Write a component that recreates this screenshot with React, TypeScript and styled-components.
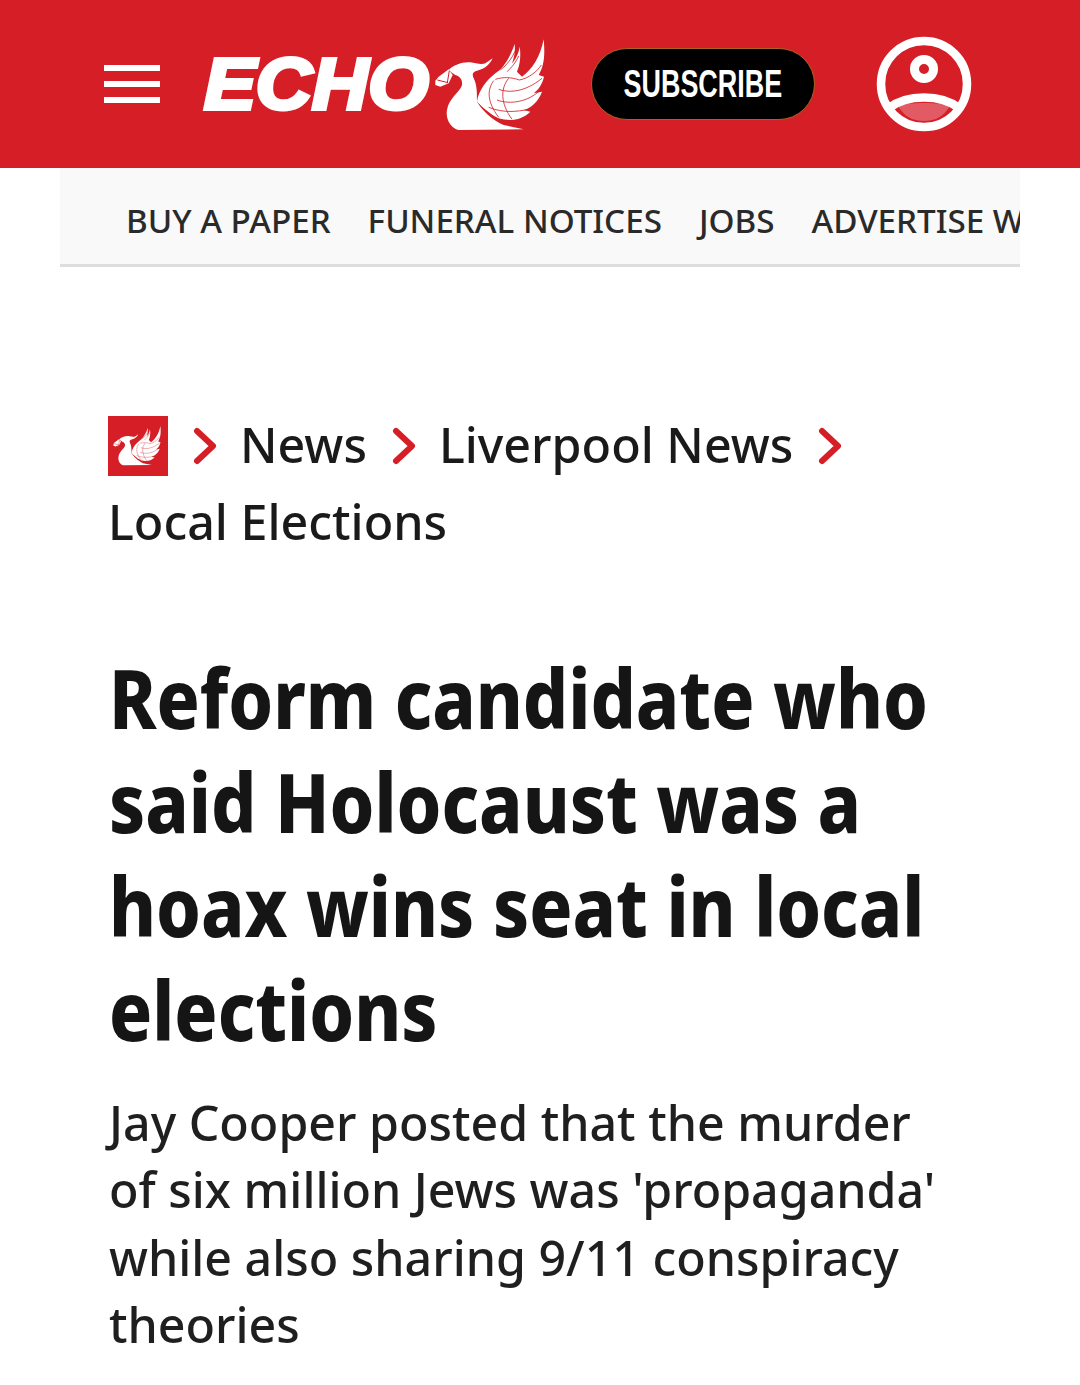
import React from "react";
import styled, { createGlobalStyle } from "styled-components";

const Global = createGlobalStyle`
  html, body { margin: 0; padding: 0; background: #fff; }
  body { font-family: "Noto Sans", "Open Sans", sans-serif; color: #1a1a1a; }
`;

const Page = styled.div`
  width: 1080px;
  height: 1385px;
  overflow: hidden;
`;

const Header = styled.header`
  height: 168px;
  background: #d51e26;
  display: flex;
  align-items: center;
  padding-left: 104px;
  box-sizing: border-box;
`;

const Burger = styled.div`
  width: 56px;
  display: flex;
  flex-direction: column;
  gap: 10px;
  margin-right: 44px;
  margin-top: -1px;
  & > span { display: block; height: 6px; background: #fff; }
`;

const Logo = styled.div`
  display: flex;
  align-items: flex-start;
  width: 387px;
  height: 100px;
  margin-top: -8px;
`;

const LogoText = styled.span`
  font-family: "Liberation Sans", Arial, sans-serif;
  font-weight: 700;
  font-style: italic;
  font-size: 72px;
  line-height: 72px;
  margin-top: 18px;
  width: 228px;
  flex: none;
  color: #fff;
  -webkit-text-stroke: 4px #fff;
  white-space: nowrap;
  transform: scaleX(1.08);
  transform-origin: 0 0;
`;

const Subscribe = styled.div`
  width: 224px;
  height: 72px;
  margin-right: 61px;
  border-radius: 36px;
  background: #000;
  border: 1px solid #a8641e;
  box-sizing: border-box;
  display: flex;
  align-items: center;
  justify-content: center;
  color: #fff;
  font-family: "Liberation Sans", sans-serif;
  font-weight: 700;
  font-size: 39px;
`;

const SubscribeLabel = styled.span`
  display: inline-block;
  transform: scaleX(0.69);
`;

const Nav = styled.nav`
  margin: 0 60px;
  height: 99px;
  box-sizing: border-box;
  background: #f9f9f9;
  border-bottom: 3px solid #dedede;
  display: flex;
  align-items: center;
  gap: 37px;
  padding: 8px 0 0 66px;
  overflow: hidden;
  white-space: nowrap;
`;

const NavItem = styled.span`
  font-size: 33.2px;
  font-weight: 500;
  color: #2a2a2a;
  flex: none;
`;

const Crumbs = styled.div`
  margin-top: 149px;
  padding-left: 108px;
  display: flex;
  flex-wrap: wrap;
  align-items: center;
  row-gap: 17px;
  width: 880px;
  box-sizing: border-box;
`;

const CrumbIcon = styled.div`
  width: 60px;
  height: 60px;
  background: #d51e26;
  display: flex;
  align-items: center;
  justify-content: center;
`;

const CrumbText = styled.span`
  font-size: 48.4px;
  font-weight: 500;
  line-height: 56px;
  padding-bottom: 4px;
  color: #1a1a1a;
`;

const Chevron = styled.svg`
  width: 24px;
  height: 38px;
  margin: 0 23px 0 25px;
`;

const Headline = styled.h1`
  margin: 92px 0 0 0;
  padding-left: 109px;
  font-family: "Noto Sans", sans-serif;
  font-weight: 800;
  font-size: 82px;
  line-height: 104px;
  color: #151515;
  transform: scaleX(0.87);
  transform-origin: 109px 0;
`;

const HeadLine = styled.span`
  display: block;
  white-space: nowrap;
`;

const Standfirst = styled.p`
  margin: 28px 0 0 0;
  padding-left: 109px;
  font-size: 48.3px;
  font-weight: 500;
  line-height: 67.3px;
  color: #1f1f1f;
`;

const StandLine = styled.span`
  display: block;
  white-space: nowrap;
`;

const Bird = ({ width, red = "#d51e26" }: { width: number; red?: string }) => (
  <svg width={width} viewBox="0 0 360 330" style={{ display: "block", flex: "none" }}>
    <path
      fill="#fff"
      d="M50 120C65 105 90 95 115 97C130 100 150 105 160 100L182 85C175 100 160 118 135 122C125 125 118 130 125 145C135 165 135 185 135 215C150 240 180 270 215 285L275 298L80 300C55 295 40 265 45 240C50 205 85 185 90 165C92 150 85 140 70 135L60 128Z"
    />
    <path fill="#fff" d="M10 152L20 140L50 118L62 135L50 160L25 170L10 165Z" />
    <path fill="none" stroke={red} strokeWidth="3" d="M16 150L48 158M52 122L46 158" />
    <path
      fill="#fff"
      d="M335 28C340 80 335 110 320 135L336 140C330 165 318 180 305 190L330 185C320 215 295 235 275 240L295 245C270 270 235 275 200 265C170 250 145 225 135 215C140 180 165 150 190 130C215 115 235 80 248 42C250 60 248 80 240 100C250 90 260 70 263 50C268 80 262 110 255 125L270 140C300 120 325 80 335 28Z"
    />
    <path
      fill="none"
      stroke={red}
      strokeWidth="2.5"
      d="M205 120C225 105 240 85 250 62M225 125C240 110 250 100 260 78M190 148C215 140 240 142 262 150C290 145 315 125 328 105M200 178C235 190 280 185 330 145M195 210C235 225 290 215 325 180M170 232C215 250 255 245 290 238M185 152C165 180 165 215 200 262M230 145C205 175 205 220 240 268"
    />
  </svg>
);

const UserIcon = () => (
  <svg width="96" height="96" viewBox="0 0 96 96" style={{ display: "block", flex: "none" }}>
    <path d="M22 70C30 66 66 66 74 70C68 80 60 85 48 85C36 85 28 80 22 70Z" fill="#e25a63" />
    <circle cx="48" cy="48" r="43" fill="none" stroke="#fff" strokeWidth="8.5" />
    <circle cx="48" cy="33" r="9.5" fill="none" stroke="#fff" strokeWidth="9" />
    <path d="M13 72C22 65 34 61.5 48 61.5C62 61.5 74 65 83 72" fill="none" stroke="#fff" strokeWidth="8.5" />
  </svg>
);

const ChevronIcon = () => (
  <Chevron viewBox="0 0 24 38">
    <path d="M4 4L20 19L4 34" fill="none" stroke="#d51e26" strokeWidth="6" strokeLinecap="round" strokeLinejoin="round" />
  </Chevron>
);

export default function App() {
  return (
    <Page>
      <Global />
      <Header>
        <Burger>
          <span />
          <span />
          <span />
        </Burger>
        <Logo>
          <LogoText>ECHO</LogoText>
          <Bird width={120} />
        </Logo>
        <Subscribe>
          <SubscribeLabel>SUBSCRIBE</SubscribeLabel>
        </Subscribe>
        <UserIcon />
      </Header>
      <Nav>
        <NavItem>BUY A PAPER</NavItem>
        <NavItem>FUNERAL NOTICES</NavItem>
        <NavItem>JOBS</NavItem>
        <NavItem>ADVERTISE WITH US</NavItem>
      </Nav>
      <Crumbs>
        <CrumbIcon>
          <Bird width={52} />
        </CrumbIcon>
        <ChevronIcon />
        <CrumbText>News</CrumbText>
        <ChevronIcon />
        <CrumbText>Liverpool News</CrumbText>
        <ChevronIcon />
        <CrumbText>Local Elections</CrumbText>
      </Crumbs>
      <Headline>
        <HeadLine>Reform candidate who</HeadLine>
        <HeadLine>said Holocaust was a</HeadLine>
        <HeadLine>hoax wins seat in local</HeadLine>
        <HeadLine>elections</HeadLine>
      </Headline>
      <Standfirst>
        <StandLine>Jay Cooper posted that the murder</StandLine>
        <StandLine>of six million Jews was 'propaganda'</StandLine>
        <StandLine>while also sharing 9/11 conspiracy</StandLine>
        <StandLine>theories</StandLine>
      </Standfirst>
    </Page>
  );
}
